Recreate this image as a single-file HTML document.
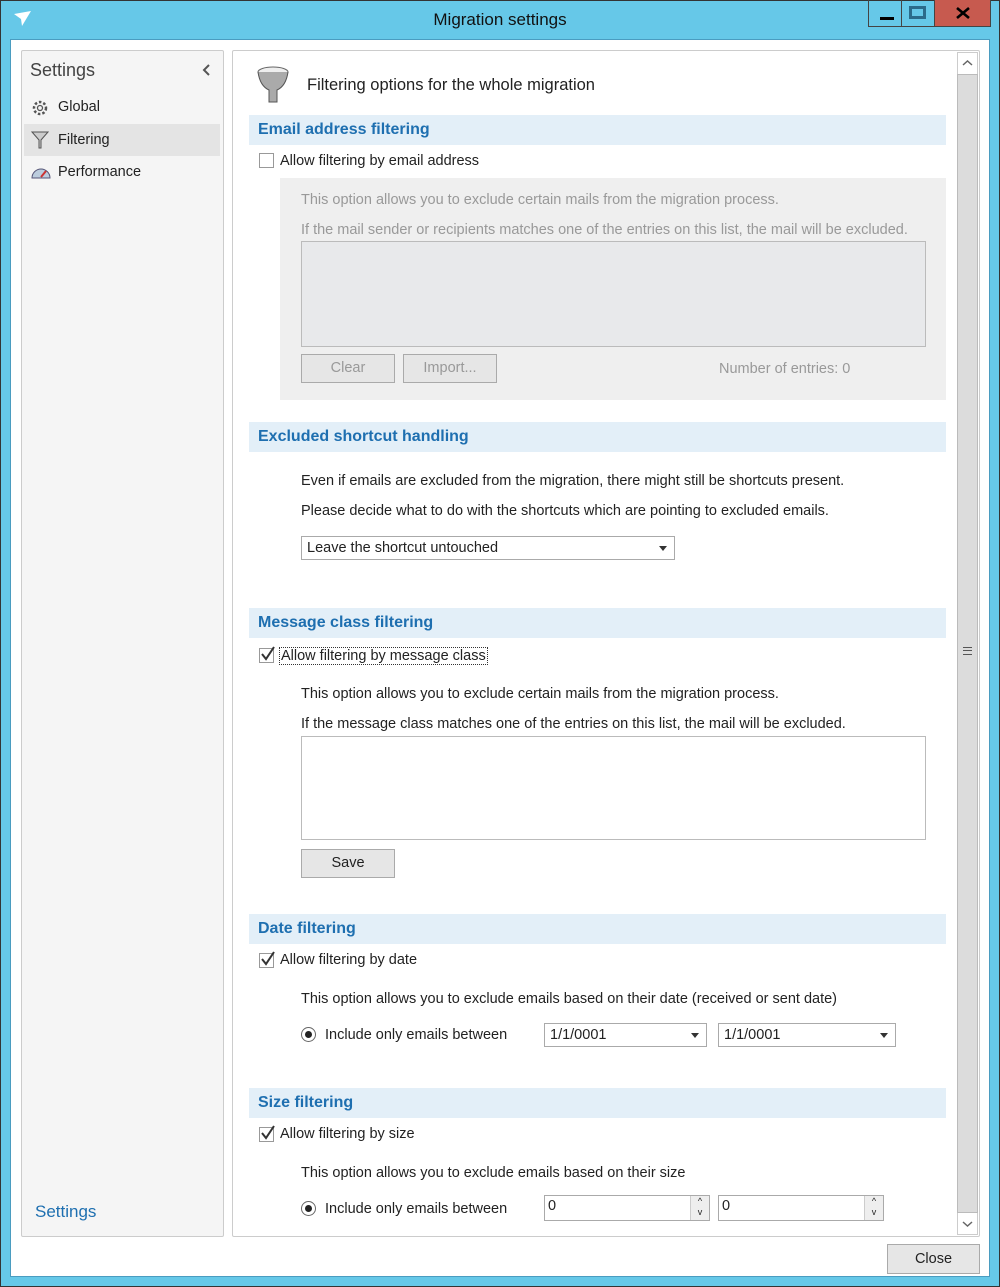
<!DOCTYPE html>
<html><head><style>
*{box-sizing:border-box;margin:0;padding:0}
body{width:1000px;height:1287px;position:relative;background:#66c8e8;font-family:"Liberation Sans",sans-serif;font-size:14.5px;color:#222;overflow:hidden}
.a{position:absolute}
.frame{left:0;top:0;width:1000px;height:1287px;border:1px solid #333}
.client{left:10px;top:39px;width:980px;height:1238px;background:#fff;border:1px solid #4a9cc0}
.hdr{left:249px;width:697px;height:30px;background:#e3eff8;color:#1e6fb0;font-weight:bold;font-size:16px;padding:6px 9px}
.cb{width:15px;height:15px;border:1px solid #999;background:#fff}
.btn{height:29px;border:1px solid #aaa;background:#e6e6e6;text-align:center;line-height:27px}
.combo{height:24px;border:1px solid #aaa;background:#fff;padding:3px 5px}
.combo:after{content:"";position:absolute;right:7px;top:9px;border:4px solid transparent;border-top:5px solid #333}
.g{color:#999}
.ck{position:absolute;width:18px;height:18px}
</style></head><body>
<div class="a frame"></div>
<svg class="a" style="left:13px;top:10px" width="20" height="18" viewBox="0 0 20 18"><path d="M1 4 L18 1 L9 16 L8 9 Z" fill="#fff"/></svg>
<div class="a" style="left:0;width:1000px;top:10px;text-align:center;font-size:17px;color:#111">Migration settings</div>
<div class="a" style="left:868px;top:0;width:34px;height:27px;border:1px solid #444;border-top:0"><div class="a" style="left:11px;top:17px;width:14px;height:3px;background:#000"></div></div>
<div class="a" style="left:902px;top:0;width:33px;height:27px;border:1px solid #444;border-left:0;border-top:0"><div class="a" style="left:7px;top:6px;width:17px;height:13px;border:3px solid #2b6b8a"></div></div>
<div class="a" style="left:934px;top:0;width:57px;height:27px;background:#c75a4f;border:1px solid #444;border-top:0"><svg class="a" style="left:21px;top:7px" width="14" height="12" viewBox="0 0 14 12"><path d="M1 1 L13 11 M13 1 L1 11" stroke="#000" stroke-width="2.6"/></svg></div>
<div class="a client"></div>
<!-- left panel -->
<div class="a" style="left:21px;top:50px;width:203px;height:1187px;background:#f5f5f5;border:1px solid #ccc;border-radius:2px"></div>
<div class="a" style="left:30px;top:60px;font-size:18px;color:#444">Settings</div>
<svg class="a" style="left:202px;top:64px" width="8" height="12" viewBox="0 0 8 12"><path d="M7 1 L2 6 L7 11" fill="none" stroke="#555" stroke-width="2"/></svg>
<div class="a" style="left:24px;top:124px;width:196px;height:32px;background:#e4e4e4"></div>
<svg class="a" style="left:31px;top:99px" width="18" height="18" viewBox="0 0 18 18"><circle cx="9" cy="9" r="6" fill="none" stroke="#555" stroke-width="2.5" stroke-dasharray="2.5 2"/><circle cx="9" cy="9" r="2.5" fill="none" stroke="#555" stroke-width="1.3"/></svg>
<div class="a" style="left:58px;top:99px">Global</div>
<svg class="a" style="left:31px;top:130px" width="18" height="20" viewBox="0 0 18 20"><path d="M1 2 H17 L10 10 V18 H8 V10 Z" fill="#ccc" stroke="#555"/></svg>
<div class="a" style="left:58px;top:132px">Filtering</div>
<svg class="a" style="left:31px;top:165px" width="20" height="14" viewBox="0 0 20 14"><path d="M1 13 A9 9 0 0 1 19 13 Z" fill="#bcd" stroke="#557"/><path d="M10 12 L15 6" stroke="#c33" stroke-width="2"/></svg>
<div class="a" style="left:58px;top:164px">Performance</div>
<div class="a" style="left:35px;top:1202px;font-size:17px;color:#1e6fb0">Settings</div>
<!-- right panel -->
<div class="a" style="left:232px;top:50px;width:748px;height:1187px;background:#fff;border:1px solid #ccc;border-radius:2px"></div>
<div class="a" style="left:957px;top:52px;width:21px;height:1183px;border:1px solid #ccc;background:#fff"></div>
<div class="a" style="left:957px;top:74px;width:21px;height:1139px;background:#dcdcdc;border:1px solid #bbb"></div>
<svg class="a" style="left:962px;top:59px" width="11" height="8" viewBox="0 0 11 8"><path d="M1 6 L5.5 2 L10 6" fill="none" stroke="#666" stroke-width="1.5"/></svg>
<svg class="a" style="left:962px;top:1220px" width="11" height="8" viewBox="0 0 11 8"><path d="M1 2 L5.5 6 L10 2" fill="none" stroke="#666" stroke-width="1.5"/></svg>
<div class="a" style="left:963px;top:647px;width:9px;height:8px;border-top:1px solid #555;border-bottom:1px solid #555"><div style="margin-top:2px;height:1px;background:#555"></div></div>
<svg class="a" style="left:256px;top:66px" width="34" height="38" viewBox="0 0 34 38"><ellipse cx="17" cy="6" rx="15" ry="5" fill="#eee" stroke="#666"/><path d="M2 6 Q4 20 13 24 V36 H21 V24 Q30 20 32 6" fill="#aaa" stroke="#555"/></svg>
<div class="a" style="left:307px;top:76px;font-size:16.5px">Filtering options for the whole migration</div>

<div class="a hdr" style="top:115px">Email address filtering</div>
<div class="a cb" style="left:259px;top:153px"></div>
<div class="a" style="left:280px;top:153px">Allow filtering by email address</div>
<div class="a" style="left:280px;top:178px;width:666px;height:222px;background:#efefef"></div>
<div class="a g" style="left:301px;top:192px">This option allows you to exclude certain mails from the migration process.</div>
<div class="a g" style="left:301px;top:222px">If the mail sender or recipients matches one of the entries on this list, the mail will be excluded.</div>
<div class="a" style="left:301px;top:241px;width:625px;height:106px;background:#e8e9eb;border:1px solid #bbb"></div>
<div class="a btn g" style="left:301px;top:354px;width:94px">Clear</div>
<div class="a btn g" style="left:403px;top:354px;width:94px">Import...</div>
<div class="a g" style="left:719px;top:361px">Number of entries: 0</div>

<div class="a hdr" style="top:422px">Excluded shortcut handling</div>
<div class="a" style="left:301px;top:473px">Even if emails are excluded from the migration, there might still be shortcuts present.</div>
<div class="a" style="left:301px;top:503px">Please decide what to do with the shortcuts which are pointing to excluded emails.</div>
<div class="a combo" style="left:301px;top:536px;width:374px">Leave the shortcut untouched</div>

<div class="a hdr" style="top:608px">Message class filtering</div>
<div class="a cb" style="left:259px;top:648px"></div>
<svg class="ck" style="left:259px;top:645px" viewBox="0 0 18 18"><path d="M3 9 L7 14 L15 2" fill="none" stroke="#333" stroke-width="2"/></svg>
<div class="a" style="left:279px;top:647px;border:1px dotted #333;padding:0 1px;line-height:16px">Allow filtering by message class</div>
<div class="a" style="left:301px;top:686px">This option allows you to exclude certain mails from the migration process.</div>
<div class="a" style="left:301px;top:716px">If the message class matches one of the entries on this list, the mail will be excluded.</div>
<div class="a" style="left:301px;top:736px;width:625px;height:104px;border:1px solid #bbb"></div>
<div class="a btn" style="left:301px;top:849px;width:94px">Save</div>

<div class="a hdr" style="top:914px">Date filtering</div>
<div class="a cb" style="left:259px;top:953px"></div>
<svg class="ck" style="left:259px;top:950px" viewBox="0 0 18 18"><path d="M3 9 L7 14 L15 2" fill="none" stroke="#333" stroke-width="2"/></svg>
<div class="a" style="left:280px;top:952px">Allow filtering by date</div>
<div class="a" style="left:301px;top:991px">This option allows you to exclude emails based on their date (received or sent date)</div>
<div class="a" style="left:301px;top:1027px;width:15px;height:15px;border:1px solid #666;border-radius:50%;background:#fff"><div style="margin:3px;width:7px;height:7px;border-radius:50%;background:#222"></div></div>
<div class="a" style="left:325px;top:1027px">Include only emails between</div>
<div class="a combo" style="left:544px;top:1023px;width:163px">1/1/0001</div>
<div class="a combo" style="left:718px;top:1023px;width:178px">1/1/0001</div>

<div class="a hdr" style="top:1088px">Size filtering</div>
<div class="a cb" style="left:259px;top:1127px"></div>
<svg class="ck" style="left:259px;top:1124px" viewBox="0 0 18 18"><path d="M3 9 L7 14 L15 2" fill="none" stroke="#333" stroke-width="2"/></svg>
<div class="a" style="left:280px;top:1126px">Allow filtering by size</div>
<div class="a" style="left:301px;top:1165px">This option allows you to exclude emails based on their size</div>
<div class="a" style="left:301px;top:1201px;width:15px;height:15px;border:1px solid #666;border-radius:50%;background:#fff"><div style="margin:3px;width:7px;height:7px;border-radius:50%;background:#222"></div></div>
<div class="a" style="left:325px;top:1201px">Include only emails between</div>
<div class="a" style="left:544px;top:1195px;width:166px;height:26px;border:1px solid #aaa;padding:2px 3px">0</div>
<div class="a" style="left:690px;top:1196px;width:19px;height:24px;background:#eee;border-left:1px solid #ccc;font-size:9px;text-align:center;line-height:11px">^<br>v</div>
<div class="a" style="left:718px;top:1195px;width:166px;height:26px;border:1px solid #aaa;padding:2px 3px">0</div>
<div class="a" style="left:864px;top:1196px;width:19px;height:24px;background:#eee;border-left:1px solid #ccc;font-size:9px;text-align:center;line-height:11px">^<br>v</div>

<div class="a btn" style="left:887px;top:1244px;width:93px;height:30px;line-height:28px">Close</div>
</body></html>
